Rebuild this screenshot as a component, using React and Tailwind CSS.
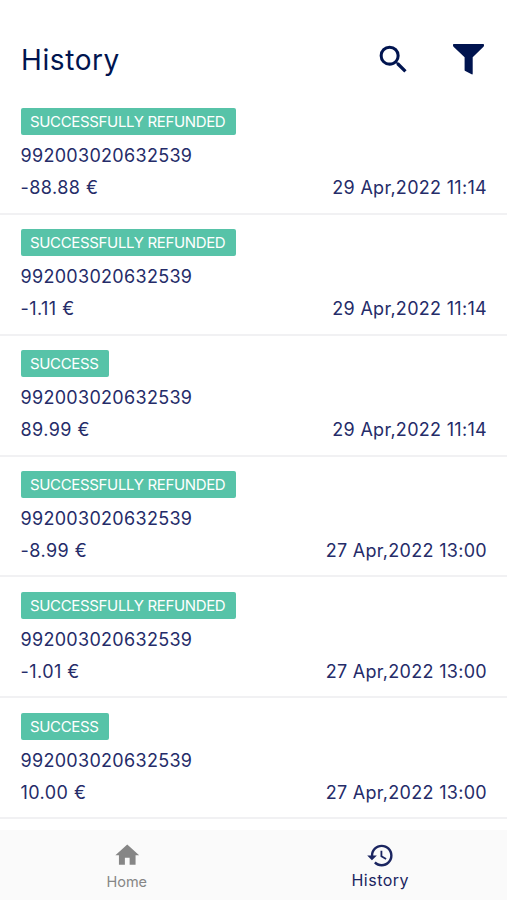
import { useState } from 'react';
import { MdHistory, MdHome, MdSearch } from 'react-icons/md';

const TRANSACTIONS = [
  { id: 1, status: 'SUCCESSFULLY REFUNDED', reference: '992003020632539', amount: '-88.88 €', date: '29 Apr,2022 11:14' },
  { id: 2, status: 'SUCCESSFULLY REFUNDED', reference: '992003020632539', amount: '-1.11 €', date: '29 Apr,2022 11:14' },
  { id: 3, status: 'SUCCESS', reference: '992003020632539', amount: '89.99 €', date: '29 Apr,2022 11:14' },
  { id: 4, status: 'SUCCESSFULLY REFUNDED', reference: '992003020632539', amount: '-8.99 €', date: '27 Apr,2022 13:00' },
  { id: 5, status: 'SUCCESSFULLY REFUNDED', reference: '992003020632539', amount: '-1.01 €', date: '27 Apr,2022 13:00' },
  { id: 6, status: 'SUCCESS', reference: '992003020632539', amount: '10.00 €', date: '27 Apr,2022 13:00' },
];

function FunnelIcon({ className = '' }) {
  return (
    <svg viewBox="0 0 31 31" fill="currentColor" className={className} aria-hidden="true">
      <path d="M.8 0h29.4q.8 0 .8.8v.8q0 .6-.5 1.1L19.7 13.3v16.3q0 1.2-1.1.7l-6.3-3.2q-.7-.4-.7-1.2V13.3L.5 2.7Q0 2.200 0 1.600V.8Q0 0 .8 0z" />
    </svg>
  );
}

function TransactionRow({ status, reference, amount, date }) {
  return (
    <li className="h-[120.9px] border-b-2 border-[#f1f1f3] pl-[20.5px] pr-5 pt-[14.5px]">
      <div className="flex">
        <span className="h-[27px] rounded-[2px] bg-[#57c3a8] pl-[9.5px] pr-[10.5px] text-[15px] leading-[27px] tracking-[-0.34px] text-white">
          {status}
        </span>
      </div>
      <p className="mt-[5px] text-[18px] leading-8 tracking-[0.3px]">{reference}</p>
      <div className="flex justify-between text-[18px] leading-8">
        <span className="tracking-[0.45px]">{amount}</span>
        <span className="tracking-[0.3px]">{date}</span>
      </div>
    </li>
  );
}

export default function App() {
  const [activeTab, setActiveTab] = useState('history');

  const tabColor = (tab) => (activeTab === tab ? 'text-[#1b2560]' : 'text-[#868686]');

  return (
    <div className="flex h-[900px] w-[507px] flex-col overflow-hidden bg-white font-['Inter',sans-serif] text-[#252c69]">
      {/* Header */}
      <header className="flex h-[93.9px] shrink-0 items-start justify-between pl-[21px] pr-[23px] pt-10 text-[#00144f]">
        <h1 className="text-[28px] leading-10 tracking-[0.6px]">History</h1>
        <div className="flex items-start gap-[41.5px]">
          <button type="button" aria-label="Search">
            <MdSearch className="mt-px size-[37px]" />
          </button>
          <button type="button" aria-label="Filter" className="mt-1">
            <FunnelIcon className="size-[31px]" />
          </button>
        </div>
      </header>

      {/* Transactions */}
      <ul className="min-h-0 flex-1">
        {TRANSACTIONS.map(({ id, ...transaction }) => (
          <TransactionRow key={id} {...transaction} />
        ))}
      </ul>

      {/* Bottom navigation */}
      <nav className="grid h-[70px] shrink-0 grid-cols-2 bg-[#fafafa]">
        <button
          type="button"
          onClick={() => setActiveTab('home')}
          className={`flex flex-col items-center pt-[11px] ${tabColor('home')}`}
        >
          <MdHome className="size-[28.5px]" />
          <span className="text-[14.5px] leading-6">Home</span>
        </button>
        <button
          type="button"
          onClick={() => setActiveTab('history')}
          className={`flex flex-col items-center pt-[11px] ${tabColor('history')}`}
        >
          <MdHistory className="size-[29px]" />
          <span className="text-[16px] leading-5 tracking-[0.5px]">History</span>
        </button>
      </nav>
    </div>
  );
}
